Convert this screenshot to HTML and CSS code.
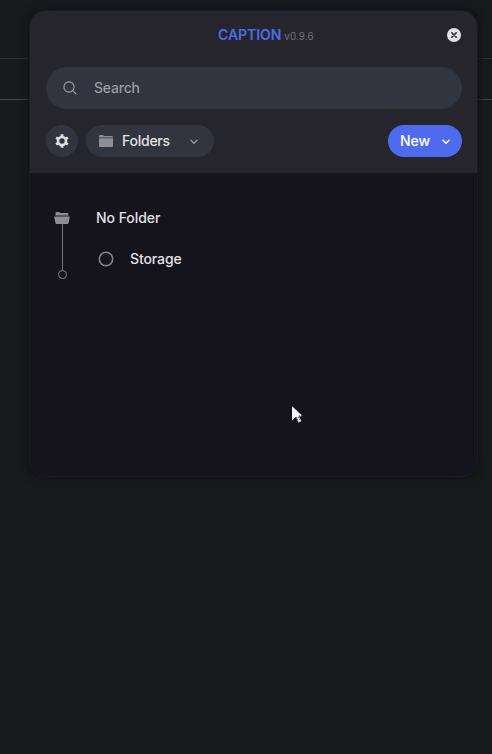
FILE: index.html
```html
<!DOCTYPE html>
<html lang="en">
<head>
<meta charset="utf-8">
<title>Caption</title>
<link rel="stylesheet" href="styles.css">
</head>
<body>
<div class="backdrop"></div>
<main class="panel">
  <header class="head">
    <div class="title-row">
      <div class="title"><span class="brand">CAPTION</span><span class="version">v0.9.6</span></div>
      <button class="close" aria-label="Close"><svg width="14" height="14" viewBox="0 0 14 14"><circle cx="7" cy="7" r="7" fill="#e2e1e6"/><path d="M4.8 4.8l4.4 4.4M9.2 4.8L4.8 9.2" stroke="#26252e" stroke-width="1.6" stroke-linecap="round"/></svg></button>
    </div>
    <div class="search">
      <svg width="16" height="16" viewBox="0 0 16 16" fill="none" stroke="#a09fa6" stroke-width="1.1" stroke-linecap="round"><circle cx="7" cy="7" r="5.1"/><path d="M10.7 10.7l3.3 3.3"/></svg>
      <span class="placeholder">Search</span>
    </div>
    <div class="toolbar">
      <button class="gear" aria-label="Settings"><svg width="14" height="14" viewBox="0 0 14 14" fill="none" stroke="#e0dfe4"><circle cx="7" cy="7" r="4" stroke-width="2.6"/><path stroke-width="2.8" d="M7 .2v2.300M7 11.500v2.300M1.100 3.600l2 1.150M10.900 9.250l2 1.150M1.100 10.400l2-1.150M10.900 4.750l2-1.150"/></svg></button>
      <button class="picker">
        <svg width="14" height="12" viewBox="0 0 14 12" fill="#8e8d95"><path d="M0 1a1 1 0 0 1 1-1h3l1.100 1H13a1 1 0 0 1 1 1v.4H0z"/><path d="M0 3.200h14V11a1 1 0 0 1-1 1H1a1 1 0 0 1-1-1z"/></svg>
        <span class="label picker-label">Folders</span>
        <svg class="chevron" width="8" height="6" viewBox="0 0 8 6" fill="none" stroke="#9a99a1" stroke-width="1.300" stroke-linecap="round" stroke-linejoin="round"><path d="M.9 1.200L4 4.300l3.100-3.100"/></svg>
      </button>
      <button class="new"><span class="label">New</span>
        <svg class="new-chevron" width="8" height="6" viewBox="0 0 8 6" fill="none" stroke="#fff" stroke-width="1.500" stroke-linecap="round" stroke-linejoin="round"><path d="M.9 1.200L4 4.300l3.100-3.100"/></svg>
      </button>
    </div>
  </header>
  <section class="tree">
    <div class="rail">
      <svg width="16" height="12" viewBox="0 0 16 12" fill="#8e8d93"><path d="M1.500 4V.8A.8.8 0 0 1 2.300 0h3l1 1.100h7.200a.8.8 0 0 1 .8.8V4z"/><path d="M1.500 3.300h13v.9h-13z" fill="#414047"/><path d="M.7 4.600h14.600c.4 0 .6.300.5.700L14.500 11c-.1.600-.5 1-1.100 1H2.600c-.6 0-1-.4-1.100-1L.2 5.300c-.1-.4.1-.7.5-.7z"/></svg>
      <span class="stem"></span>
      <span class="end"></span>
    </div>
    <div class="items">
      <div class="folder">No Folder</div>
      <div class="item"><svg class="ring" width="16" height="16" viewBox="0 0 16 16"><circle cx="8" cy="8" r="6.700" fill="none" stroke="#85848b" stroke-width="1.600"/></svg><span class="item-label">Storage</span></div>
    </div>
  </section>
</main>
<svg class="cursor" width="12" height="19" viewBox="0 0 12 19"><path fill="#f4f3ef" d="M0 1v14.500l3.400-3.300L10.800 11z"/><path d="M1 1.500L10.500 11H6" fill="none" stroke="#16141b" stroke-width="1" stroke-dasharray="1 1"/><path d="M4.500 12.500l2 4.600 2.500-1-2.300-4.500" fill="#e6e5e4" stroke="#f4f3ef" stroke-width=".7"/><path d="M4.500 12.500l1.700 3.600M6.500 12l1.800 3.800" stroke="#16141b" stroke-width=".8" stroke-dasharray="1 1"/></svg>
</body>
</html>
```
FILE: styles.css
```css
* { box-sizing: border-box; }
body {
  margin: 0;
  height: 754px;
  padding: 11px 15px 0 30px;
  overflow: hidden;
  background: #181b1d;
  font-family: Inter, "Liberation Sans", sans-serif;
  font-size: 14px;
  font-weight: 500;
  color: #e2e1e5;
}
button { border: 0; padding: 0; font: inherit; color: inherit; }
svg { display: block; flex: none; }
.backdrop {
  position: absolute;
  z-index: -1;
  top: 58px;
  left: 0;
  width: 100%;
  height: 42px;
  border-top: 1px solid #2f3035;
  border-bottom: 1px solid #48494c;
}
.panel {
  width: 447px;
  height: 465px;
  overflow: hidden;
  border-radius: 15px;
  background: #15131c;
  box-shadow: 0 0 0 1px #1c1b1f, 0 0 9px 3px #101116;
}
.head { height: 162px; padding: 0 15px 0 16px; background: #26252e; }
.title-row { display: flex; align-items: center; height: 48px; }
.title { display: flex; align-items: baseline; gap: 3px; margin-left: 172px; padding-bottom: 1px; }
.brand { color: #4f6ae8; font-weight: 600; letter-spacing: -.05px; }
.version { color: #717078; font-size: 10px; font-weight: 400; }
.close { width: 14px; height: 14px; margin: 0 1px 0 auto; background: none; }
.search {
  display: flex;
  align-items: center;
  gap: 16px;
  height: 42px;
  margin-top: 8px;
  padding-left: 16px;
  border-radius: 21px;
  background: #32343f;
}
.placeholder { padding-bottom: 2px; color: #9c9ba3; letter-spacing: -.2px; }
.toolbar { display: flex; align-items: center; margin-top: 16px; height: 32px; }
.gear { display: grid; place-items: center; width: 32px; height: 32px; border-radius: 50%; background: #32343f; }
.picker { display: flex; align-items: center; width: 128px; height: 32px; margin-left: 8px; padding: 0 16px 0 13px; border-radius: 16px; background: #32343f; }
.label { padding-bottom: 1px; }
.picker-label { margin-left: 9px; letter-spacing: -.25px; }
.chevron { margin: 2px 0 0 auto; }
.new { display: flex; align-items: center; justify-content: space-between; width: 74px; height: 32px; margin-left: auto; padding: 0 12px; border-radius: 16px; background: #4f6bed; color: #fff; }
.new-chevron { margin-top: 2px; }
.tree { display: flex; padding: 34px 16px 0 24px; }
.rail { display: flex; flex-direction: column; align-items: center; width: 16px; margin-top: 5px; }
.stem { width: 1px; height: 46px; margin-left: 1px; background: #77767d; }
.end { width: 9px; height: 9px; margin-left: 1px; border: 1px solid #85848b; border-radius: 50%; }
.items { margin-left: 26px; }
.folder, .item { display: flex; align-items: center; height: 20px; }
.folder { letter-spacing: -.05px; }
.item { margin-top: 21px; padding-left: 2px; }
.ring { margin-top: 2px; }
.item-label { margin-left: 16px; letter-spacing: -.1px; }
.cursor { position: absolute; left: 292px; top: 405px; }
```
